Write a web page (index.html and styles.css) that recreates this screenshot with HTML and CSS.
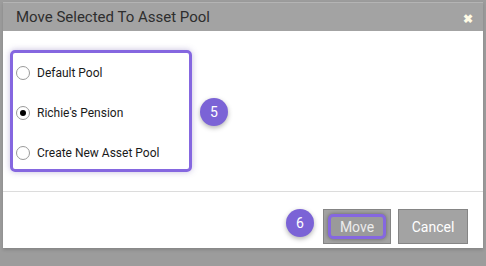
FILE: index.html
```html
<!DOCTYPE html>
<html lang="en">
<head>
    <meta charset="UTF-8">
    <title>Move Selected To Asset Pool</title>
    <link rel="stylesheet" href="styles.css">
</head>
<body>
    <div class="dialog">
        <div class="dialog-header">
            <span class="dialog-title">Move Selected To Asset Pool</span>
            <span class="close">&#10006;</span>
        </div>
        <div class="dialog-body">
            <div class="pool-list">
                <label class="pool-option"><input type="radio" name="pool"> Default Pool</label>
                <label class="pool-option"><input type="radio" name="pool" checked> Richie's Pension</label>
                <label class="pool-option"><input type="radio" name="pool"> Create New Asset Pool</label>
            </div>
            <span class="step-badge">5</span>
        </div>
        <div class="dialog-footer">
            <span class="step-badge">6</span>
            <button class="btn btn-move"><span class="btn-focus">Move</span></button>
            <button class="btn">Cancel</button>
        </div>
    </div>
</body>
</html>
```

FILE: styles.css
```css
body {
    margin: 0;
    font-family: Roboto, Arial, sans-serif;
    background-color: #9c9c9c;
    width: 486px;
    height: 266px;
    overflow: hidden;
}
.dialog {
    margin: 2px 3px 0 3px;
    width: 480px;
    background-color: #fff;
    border-top: 1px solid #b4b4b4;
    box-shadow: 0 2px 3px rgba(0, 0, 0, 0.15);
}
.dialog-header {
    background-color: #a3a3a3;
    height: 28px;
    display: flex;
    align-items: center;
    justify-content: space-between;
    padding: 0 10px 0 13px;
}
.dialog-title {
    font-size: 15px;
    color: #2e2e2e;
}
.close {
    color: #fffbe6;
    font-size: 12px;
    font-weight: bold;
    margin-top: 3px;
}
.dialog-body {
    display: flex;
    align-items: center;
    padding: 19px 0 19px 7px;
    border-bottom: 1px solid #dcdcdc;
}
.pool-list {
    box-sizing: border-box;
    width: 182px;
    height: 122px;
    border: 3px solid #8567e0;
    border-radius: 5px;
    box-shadow: 0 0 6px rgba(90, 70, 160, 0.35);
    display: flex;
    flex-direction: column;
    gap: 24px;
    padding: 12px 0 8px 3px;
}
.pool-option {
    display: flex;
    align-items: center;
    height: 16px;
    font-size: 12px;
    color: #1a1a1a;
}
.pool-option input {
    appearance: none;
    box-sizing: border-box;
    margin: 0 7px 0 0;
    width: 14px;
    height: 14px;
    border: 1px solid #9a9a9a;
    border-radius: 50%;
    background-color: #fff;
    display: inline-flex;
    align-items: center;
    justify-content: center;
}
.pool-option input:checked::after {
    content: "";
    width: 6px;
    height: 6px;
    border-radius: 50%;
    background-color: #000;
}
.step-badge {
    display: inline-flex;
    align-items: center;
    justify-content: center;
    width: 28px;
    height: 28px;
    border-radius: 50%;
    background-color: #7b63d6;
    color: #fff;
    font-size: 14px;
    box-shadow: 0 2px 5px rgba(0, 0, 0, 0.3);
}
.dialog-body .step-badge {
    margin-left: 8px;
    margin-top: 2px;
}
.dialog-footer {
    display: flex;
    align-items: center;
    justify-content: flex-end;
    gap: 7px;
    padding: 17px 15px 4px 0;
    height: 35px;
}
.dialog-footer .step-badge {
    margin-right: 2px;
    margin-top: -7px;
}
.btn {
    height: 35px;
    width: 70px;
    background-color: #a3a3a3;
    border: 1px solid #858585;
    color: #fff;
    font-family: Roboto, Arial, sans-serif;
    font-size: 14px;
    padding: 0;
    cursor: pointer;
}
.btn-move {
    width: 68px;
    padding: 4px;
    color: #ececec;
}
.btn-focus {
    display: flex;
    align-items: center;
    justify-content: center;
    height: 100%;
    border: 3px solid #8567e0;
    border-radius: 5px;
    box-sizing: border-box;
    box-shadow: 0 0 4px rgba(0, 0, 0, 0.4);
    background-color: #9a9a9a;
}
```
